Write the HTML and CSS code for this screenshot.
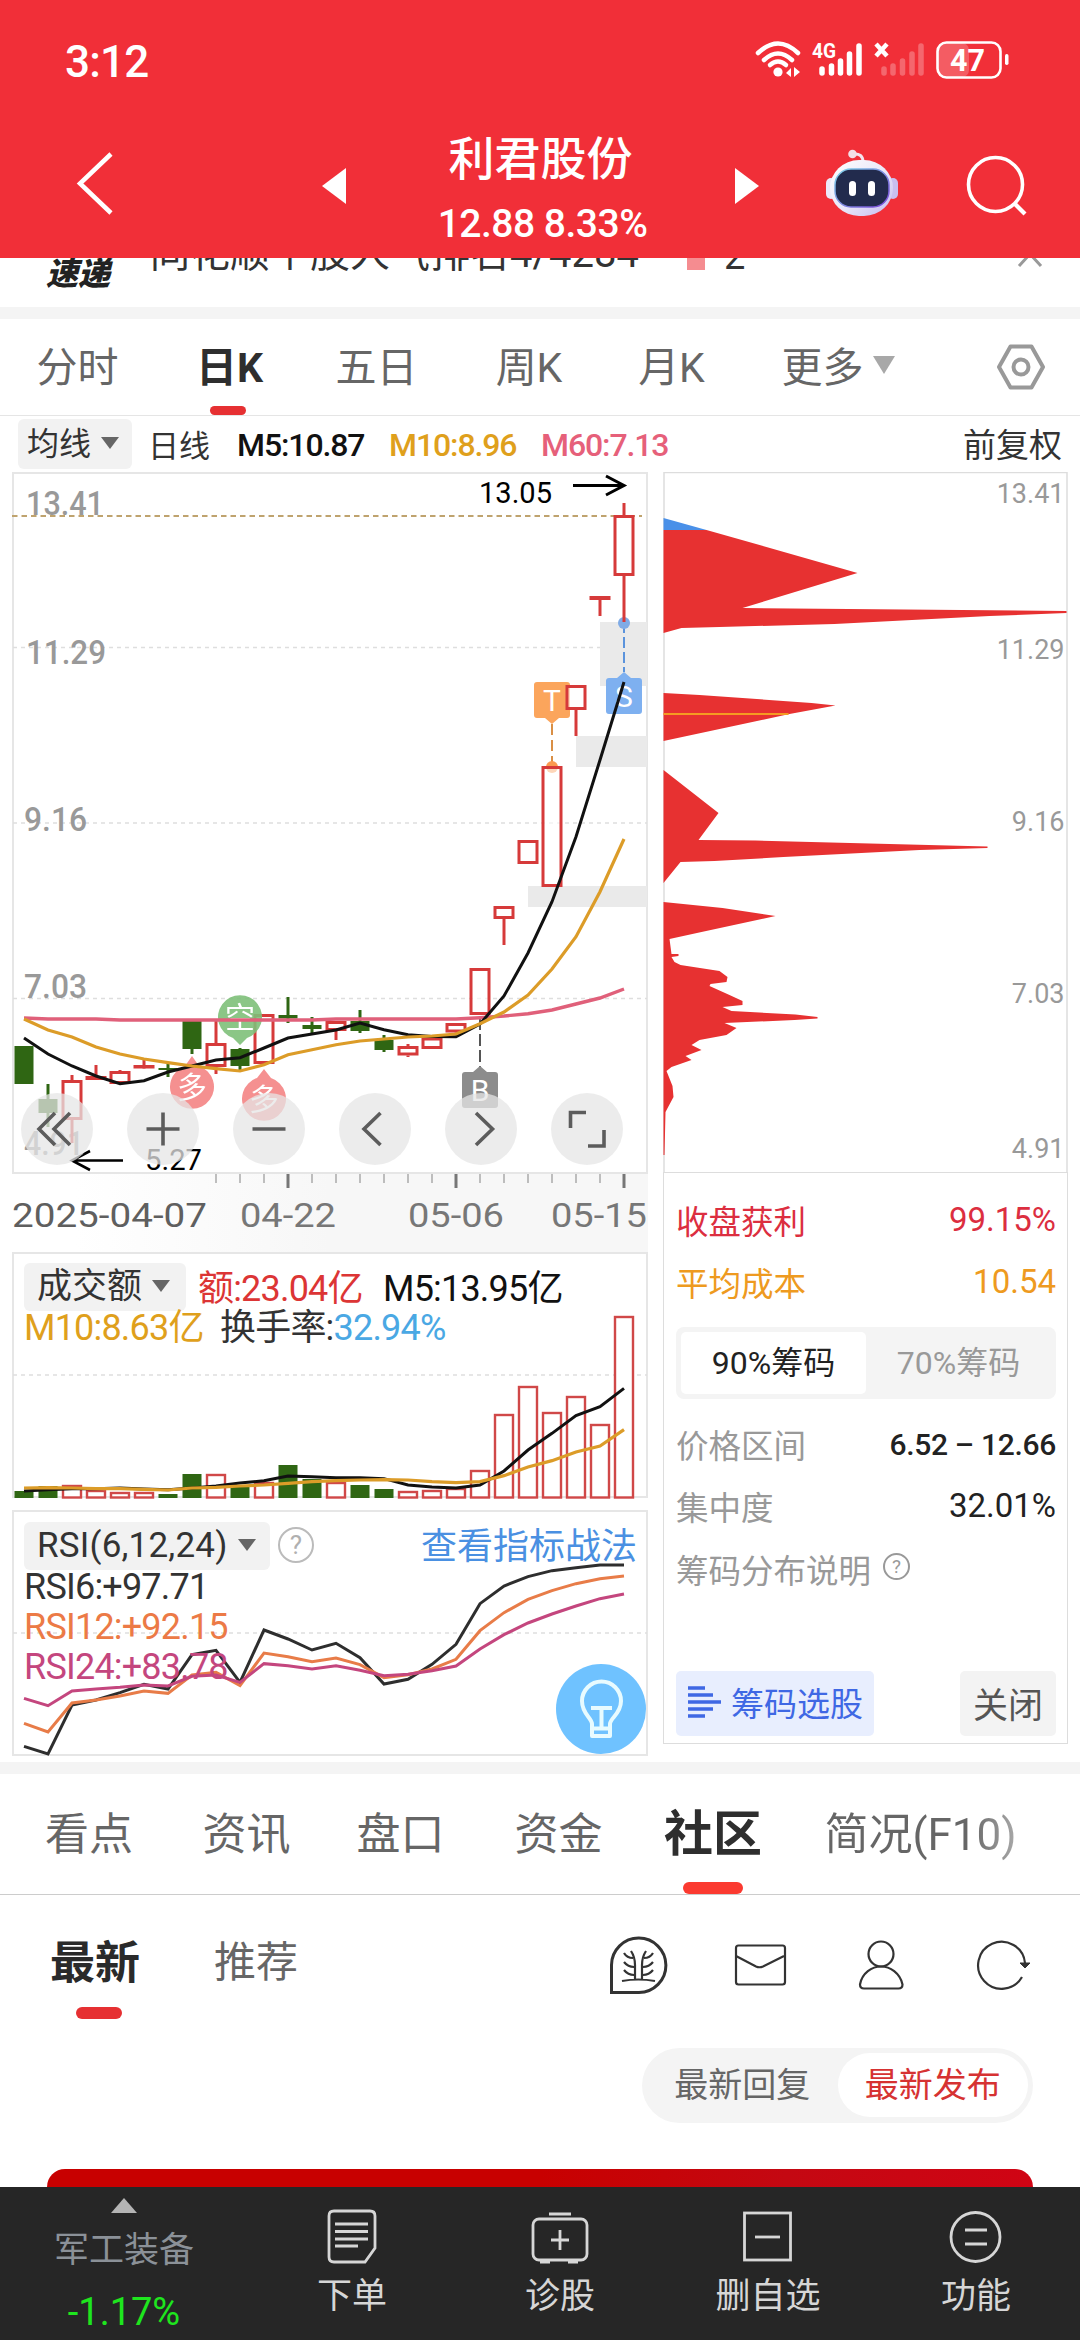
FILE: index.html
```html
<!DOCTYPE html>
<html lang="zh-CN">
<head>
    <meta charset="UTF-8">
    <meta name="viewport" content="width=device-width, initial-scale=1.0">
    <title>利君股份</title>
    <link rel="stylesheet" href="styles.css">
</head>
<body>
    <div class="header">
        <div class="statusbar">
            <span class="clock">3:12</span>
            <svg class="status-icons" width="260" height="50" viewBox="750 35 260 50">
                <g fill="none" stroke="#fff" stroke-width="4.5" stroke-linecap="round">
                    <path d="M758 53Q778 34 798 53"/>
                    <path d="M764 60Q778 47 792 60"/>
                    <path d="M770 65Q778 58 786 65"/>
                </g>
                <circle cx="778" cy="72" r="4.6" fill="#fff"/>
                <path d="M791 68v9l-5-4zM794 67v10l6-5z" fill="#fff"/>
                <text class="net" x="812" y="58" textLength="24" lengthAdjust="spacingAndGlyphs">4G</text>
                <g stroke="#fff" stroke-width="5.5" stroke-linecap="round">
                    <path d="M822 69v4M831.5 66v7M840.5 61v12M849.5 54v19M859 46v27"/>
                    <path d="M884 69v4M893 66v7M902.500 61v12M912 54v19M921 46v27" opacity=".27"/>
                </g>
                <path d="M876 44l11 12M887 44l-11 12" stroke="#fff" stroke-width="4.5"/>
                <rect x="938" y="43" width="31" height="34" rx="7" fill="#fff" opacity=".22"/>
                <rect x="937.500" y="42.500" width="63" height="35" rx="9" fill="none" stroke="#fff" stroke-width="2.600"/>
                <rect x="1005" y="54" width="3.500" height="11" rx="1.700" fill="#fff"/>
                <text class="batt" x="950" y="70.500" textLength="35" lengthAdjust="spacingAndGlyphs">47</text>
            </svg>
        </div>
        <div class="titlebar">
            <svg class="back" width="50" height="70" viewBox="70 148 50 70"><path d="M111 154L80 183.500L111 213" fill="none" stroke="#fff" stroke-width="4.500"/></svg>
            <svg class="prev" width="24" height="36" viewBox="0 0 24 36"><path d="M24 0v36L0 18z" fill="#fff"/></svg>
            <div class="title">
                <div class="stock-name">利君股份</div>
                <div class="stock-price">12.88 8.33%</div>
            </div>
            <svg class="next" width="24" height="36" viewBox="0 0 24 36"><path d="M0 0v36l24-18z" fill="#fff"/></svg>
            <svg class="robot" width="74" height="70" viewBox="824 148 74 70">
                <defs>
                    <linearGradient id="shell" x1="0" y1="0" x2="1" y2="1">
                        <stop offset="0" stop-color="#fff"/>
                        <stop offset=".55" stop-color="#e9e6f8"/>
                        <stop offset="1" stop-color="#c3baf0"/>
                    </linearGradient>
                    <linearGradient id="rim" x1="0" y1="0" x2="1" y2="1">
                        <stop offset="0" stop-color="#7fd4e8"/>
                        <stop offset="1" stop-color="#7a45d8"/>
                    </linearGradient>
                </defs>
                <path d="M852 154Q862 153 862 162" fill="none" stroke="#f3e4ee" stroke-width="3"/>
                <circle cx="851.500" cy="154" r="4.300" fill="#f3dfe6"/>
                <rect x="825" y="178" width="10" height="21" rx="5" fill="#ece8f8"/>
                <rect x="887" y="178" width="10" height="21" rx="5" fill="#c9bff0"/>
                <rect x="829" y="160" width="63" height="56" rx="29" fill="url(#shell)"/>
                <rect x="834" y="169" width="54" height="38" rx="16" fill="#222b4d" stroke="url(#rim)" stroke-width="1.500"/>
                <rect x="848" y="181" width="7" height="15" rx="3.500" fill="#fff"/>
                <rect x="867" y="181" width="7" height="15" rx="3.500" fill="#fff"/>
            </svg>
            <svg class="search" width="64" height="64" viewBox="964 154 64 64"><circle cx="994.500" cy="184.500" r="27" fill="none" stroke="#fff" stroke-width="3.600"/><path d="M1013 203l11 11" stroke="#fff" stroke-width="4.200"/></svg>
        </div>
    </div>

    <div class="news">
        <span class="news-tag">速递</span>
        <span class="news-text">同花顺个股人气排名4/4284</span>
        <span class="news-flag"></span>
        <span class="news-num">2</span>
        <svg class="news-arrow" width="26" height="14" viewBox="0 0 26 14"><path d="M2 8L13 -4L24 8" fill="none" stroke="#999" stroke-width="3"/></svg>
    </div>
    <div class="band"></div>

    <div class="period-tabs">
        <span>分时</span>
        <span class="active">日K</span>
        <span>五日</span>
        <span>周K</span>
        <span>月K</span>
        <span>更多<i class="caret big"></i></span>
        <svg width="50" height="48" viewBox="0 0 50 48"><path d="M14.500 3.500h21L47 24L35.500 44.500h-21L3 24z" fill="none" stroke="#999" stroke-width="4" stroke-linejoin="round"/><circle cx="25" cy="24" r="7.500" fill="none" stroke="#999" stroke-width="4"/></svg>
    </div>

    <div class="ma-row">
        <span class="chip">均线<i class="caret"></i></span>
        <span class="ma-day">日线</span>
        <span class="ma-num black">M5:10.87</span>
        <span class="ma-num yellow">M10:8.96</span>
        <span class="ma-num pink">M60:7.13</span>
        <span class="fq">前复权</span>
    </div>

    <div class="charts">
        <div class="left">
            <div class="kline">
                <svg id="kline" width="636" height="780" viewBox="12 472 636 780"></svg>
                <div class="kline-nav">
                    <span><svg viewBox="0 0 72 72"><path d="M34 20L18 36l16 16M49 20L33 36l16 16"/></svg></span>
                    <span><svg viewBox="0 0 72 72"><path d="M36 19.500v33M19.500 36h33"/></svg></span>
                    <span><svg viewBox="0 0 72 72"><path d="M19.500 36h33"/></svg></span>
                    <span><svg viewBox="0 0 72 72"><path d="M41.500 20L25 36l16.500 16"/></svg></span>
                    <span><svg viewBox="0 0 72 72"><path d="M31 20l16.500 16L31 52"/></svg></span>
                    <span><svg viewBox="0 0 72 72"><path d="M19.500 35V19.500H35M53 37v16H37"/></svg></span>
                </div>
            </div>
            <div class="volume">
                <svg id="volume" width="636" height="247" viewBox="12 1252 636 247"></svg>
                <div class="legend vol-legend">
                    <span class="chip vol-chip">成交额<i class="caret"></i></span>
                    <span class="l1 red">额:23.04亿</span>
                    <span class="l2 black">M5:13.95亿</span>
                </div>
                <div class="legend vol-legend2">
                    <span class="l3 yellow">M10:8.63亿</span>
                    <span class="l4">换手率:<b>32.94%</b></span>
                </div>
            </div>
            <div class="rsi">
                <svg id="rsi" width="636" height="247" viewBox="12 1510 636 247"></svg>
                <div class="legend rsi-head">
                    <span class="chip rsi-chip"><em>RSI(6,12,24)</em><i class="caret"></i></span>
                    <span class="help">?</span>
                    <span class="rsi-link">查看指标战法</span>
                </div>
                <div class="rsi-values">
                    <div>RSI6:+97.71</div>
                    <div class="orange">RSI12:+92.15</div>
                    <div class="purple">RSI24:+83.78</div>
                </div>
                <svg class="bulb" width="90" height="90" viewBox="0 0 90 90">
                    <circle cx="45" cy="45" r="45" fill="#6fc2ff"/>
                    <g fill="none" stroke="#e8fbff" stroke-width="4">
                        <path d="M36 72V60C36 54 26 50 26 37a19.500 19.500 0 0 1 39 0C65 50 54 54 54 60V72z" stroke-linejoin="round"/>
                        <path d="M35 44h21M45.500 44v20M36 64.500h18"/>
                    </g>
                </svg>
            </div>
        </div>

        <div class="right">
            <svg id="chips" width="405" height="700" viewBox="663.500 472 405 700"></svg>
            <div class="chip-info">
                <div class="row red2"><span>收盘获利</span><b>99.15%</b></div>
                <div class="row amber"><span>平均成本</span><b>10.54</b></div>
                <div class="segment"><span class="on">90%筹码</span><span>70%筹码</span></div>
                <div class="row gray"><span>价格区间</span><b class="range">6.52 – 12.66</b></div>
                <div class="row gray"><span>集中度</span><b>32.01%</b></div>
                <div class="row gray explain"><span>筹码分布说明</span><i class="help small">?</i></div>
                <div class="chip-btns">
                    <span class="pick">
                        <svg width="34" height="34" viewBox="0 0 34 34"><path d="M0 3h17M0 10h25M0 17h33M0 24h25M0 31h17" stroke="#3f68e4" stroke-width="3.600"/></svg>
                        筹码选股
                    </span>
                    <span class="close">关闭</span>
                </div>
            </div>
        </div>
    </div>
    <div class="band"></div>

    <div class="main-tabs">
        <span>看点</span>
        <span>资讯</span>
        <span>盘口</span>
        <span>资金</span>
        <span class="active">社区</span>
        <span class="f10">简况(F10)</span>
    </div>

    <div class="sub-tabs">
        <span class="active">最新</span>
        <span class="rec">推荐</span>
        <svg width="470" height="70" viewBox="600 1930 470 70">
            <g fill="none" stroke="#333" stroke-width="2.200">
                <path d="M611.500 1992.500V1965a27.200 27.200 0 1 1 27.500 27.500z" stroke-width="3"/>
                <path d="M631 1951q4 6 4 14v14M646 1951q-4 6-4 14v14M622 1981q16-3 33 0M624 1953q3 5 9 5M624 1962q4 5 10 5M624 1970q4 5 10 5M653 1953q-3 5-9 5M653 1962q-4 5-10 5M653 1970q-4 5-10 5"/>
                <rect x="736" y="1945.500" width="49" height="39" rx="2.500"/>
                <path d="M736 1956l20 10.500q3.500 1.500 7 0l21-10.500"/>
                <circle cx="881" cy="1954" r="12.500"/>
                <path d="M860 1984.500C862 1973 872 1966.500 881 1966.500s19 6.500 21.500 18q0 4-4 4h-34.500q-4 0-4-4z"/>
                <path d="M1022 1977A23.500 23.500 0 1 1 1025 1963"/>
            </g>
            <path d="M1020 1963h10l-5 5z" fill="#333" stroke="#333"/>
        </svg>
    </div>

    <div class="sort-row">
        <div class="sort"><span>最新回复</span><span class="on">最新发布</span></div>
    </div>
    <div class="card"></div>

    <div class="bottombar">
        <div class="sector">
            <i class="up"></i>
            <div class="sector-name">军工装备</div>
            <div class="sector-pct">-1.17%</div>
        </div>
        <div class="item">
            <svg viewBox="0 0 60 60"><path d="M12 4h36q5 0 5 5v32L43 55H12q-5 0-5-5V9q0-5 5-5z"/><path d="M13 17h33M13 24.500h33M13 32h33M13 39h23"/></svg>
            下单
        </div>
        <div class="item">
            <svg viewBox="0 0 60 60"><rect x="3" y="12" width="54" height="41" rx="6"/><path d="M19 7h22M30 23v20M21 33h18M10 55h10M38 55h10"/></svg>
            诊股
        </div>
        <div class="item">
            <svg viewBox="0 0 60 60"><rect x="6.500" y="6" width="46" height="47"/><path d="M17 30h25"/></svg>
            删自选
        </div>
        <div class="item">
            <svg viewBox="0 0 60 60"><circle cx="29.500" cy="30" r="24.500"/><path d="M19 23h22M19 37h22"/></svg>
            功能
        </div>
    </div>
    <script src="chart.js"></script>
</body>
</html>
```
FILE: styles.css
```css
body {
    margin: 0;
    width: 1080px;
    height: 2340px;
    overflow: hidden;
    background-color: #fff;
    color: #333;
    font-family: Roboto, "Noto Sans CJK SC", sans-serif;
    display: flex;
    flex-direction: column;
}
span, div {
    white-space: nowrap;
}
svg {
    display: block;
    flex-shrink: 0;
}
em, i {
    font-style: normal;
}
.red { color: #dc3535; }
.black { color: #111; }
.yellow { color: #dfa01c; }
.pink { color: #e6607a; }
.orange { color: #ec7a46; }
.purple { color: #c4467e; }

/* header */
.header {
    height: 258px;
    flex-shrink: 0;
    background-color: #f12f38;
    color: #fff;
}
.statusbar {
    height: 120px;
    display: flex;
    align-items: center;
    justify-content: space-between;
    padding: 0 70px 0 65px;
}
.clock {
    font-size: 44px;
    font-weight: 500;
    letter-spacing: -0.8px;
    padding-top: 4px;
}
.net {
    font-size: 21px;
    font-weight: 700;
    fill: #fff;
}
.batt {
    font-size: 32px;
    font-weight: 700;
    fill: #fff;
}
.titlebar {
    height: 138px;
    display: flex;
    align-items: flex-start;
}
.back { margin: 28px 0 0 70px; }
.prev { margin: 48px 0 0 202px; }
.title {
    width: 389px;
    text-align: center;
}
.stock-name {
    font-size: 46px;
    font-weight: 500;
    line-height: 60px;
    padding-top: 9px;
    color: #fff;
}
.stock-price {
    font-size: 39px;
    font-weight: 500;
    line-height: 48px;
    margin-top: 11px;
    letter-spacing: -0.5px;
    padding-left: 4px;
}
.next { margin: 48px 0 0 0; }
.robot { margin: 28px 0 0 66px; }
.search { margin: 34px 0 0 66px; }

/* news strip, scrolled half under the header */
.news {
    height: 49px;
    flex-shrink: 0;
    overflow: hidden;
    display: flex;
    align-items: flex-start;
    padding-left: 46px;
}
.news-tag {
    width: 104px;
    font-size: 32px;
    font-weight: 900;
    font-style: italic;
    line-height: 32px;
    color: #222;
}
.news-text {
    width: 537px;
    font-size: 40px;
    line-height: 40px;
    margin-top: -24px;
}
.news-flag {
    width: 18px;
    height: 12px;
    background-color: #f58c90;
}
.news-num {
    font-size: 38px;
    line-height: 40px;
    margin: -22px 0 0 19px;
}
.news-arrow { margin-left: 272px; }
.band {
    height: 12px;
    flex-shrink: 0;
    background-color: #f4f4f4;
}

/* period tabs */
.period-tabs {
    height: 96px;
    flex-shrink: 0;
    display: grid;
    grid-template-columns: 155px 149px 145px 160px 125px 208px 138px;
    align-items: center;
    justify-items: center;
    border-bottom: 1px solid #e5e5e5;
    font-size: 41px;
    color: #666;
}
.period-tabs span {
    position: relative;
    height: 96px;
    line-height: 98px;
}
.period-tabs svg { margin-left: 20px; }
.period-tabs .active {
    color: #2e2e2e;
    font-weight: 700;
}
.active::after {
    content: "";
    position: absolute;
    left: 50%;
    bottom: 0;
    width: 36px;
    height: 9px;
    margin-left: -19px;
    border-radius: 5px;
    background-color: #e63032;
}
.caret {
    display: inline-block;
    border: 9px solid transparent;
    border-top: 12px solid #666;
    border-bottom: 0;
    margin-left: 10px;
    vertical-align: 6px;
}
.caret.big {
    border-width: 18px 11px 0;
    border-top-color: #a8a8a8;
    margin-left: 9px;
    vertical-align: 8px;
}

/* moving average row */
.ma-row {
    height: 56px;
    flex-shrink: 0;
    display: flex;
    align-items: center;
    padding: 0 18px;
}
.chip {
    box-sizing: border-box;
    background-color: #f2f2f2;
    border-radius: 6px;
}
.ma-row .chip {
    width: 114px;
    height: 50px;
    line-height: 51px;
    padding-left: 9px;
    font-size: 32px;
}
.ma-day {
    width: 89px;
    margin: -2px 0 0 16px;
    font-size: 31px;
}
.ma-num {
    width: 152px;
    margin-top: 2px;
    font-size: 32px;
    font-weight: 500;
    letter-spacing: -1.1px;
}
.fq {
    margin: -2px 0 0 auto;
    font-size: 33px;
}

/* charts */
.charts {
    height: 1290px;
    flex-shrink: 0;
    display: flex;
    align-items: flex-start;
}
.left {
    width: 636px;
    margin-left: 12px;
}
.kline, .volume, .rsi {
    position: relative;
}
.kline-nav {
    position: absolute;
    left: 9px;
    top: 621px;
    display: flex;
    gap: 34px;
}
.kline-nav span {
    width: 72px;
    height: 72px;
    border-radius: 50%;
    background-color: rgba(230, 230, 230, 0.75);
}
.kline-nav path {
    fill: none;
    stroke: #5c5c5c;
    stroke-width: 3.6;
}
.kline text, #chips text { fill: #999; }
.axis {
    font-size: 34px;
    font-weight: 500;
}
.kline .date {
    font-size: 34px;
    fill: #777;
}
.kline .date.first { fill: #5f5f5f; }
.kline .tip {
    font-size: 29px;
    fill: #000;
}
.kline .mark {
    font-size: 30px;
    fill: #fff;
    text-anchor: middle;
}
.rsi { margin-top: 11px; }
.legend {
    position: absolute;
    left: 12px;
    display: flex;
    align-items: center;
    font-size: 36px;
}
.vol-legend { top: 11px; }
.vol-legend2 {
    top: 48px;
    height: 48px;
}
.legend .chip {
    height: 48px;
    line-height: 47px;
    padding-left: 13px;
    font-size: 35px;
}
.vol-chip { width: 162px; }
.l1, .l2, .l3, .l4 { letter-spacing: -0.8px; }
.l1, .l2 { margin-top: -5px; }
.l1 {
    margin-left: 12px;
    width: 185px;
}
.l3 { width: 196px; }
.l4 b {
    color: #4aa8e4;
    font-weight: 400;
}
.rsi-head { top: 12px; }
.rsi-chip { width: 246px; }
.rsi-chip em { letter-spacing: 0.2px; }
.help {
    box-sizing: border-box;
    width: 36px;
    height: 36px;
    margin: -3px 0 0 8px;
    border: 2.5px solid #bbb;
    border-radius: 50%;
    color: #b0b0b0;
    font-size: 26px;
    line-height: 32px;
    text-align: center;
}
.help.small {
    width: 27px;
    height: 27px;
    margin-left: 12px;
    border: 2px solid #999;
    color: #999;
    font-size: 19px;
    line-height: 24px;
}
.rsi-link {
    margin: -7px 0 0 107px;
    font-size: 36px;
    color: #4a90e2;
}
.rsi-values {
    position: absolute;
    left: 12px;
    top: 57px;
    font-size: 36px;
    line-height: 40px;
    letter-spacing: -0.8px;
}
.bulb {
    position: absolute;
    left: 544px;
    top: 154px;
}

/* chip distribution */
.right {
    box-sizing: border-box;
    width: 405px;
    height: 1272px;
    margin-left: 15px;
}
#chips text {
    font-size: 27px;
    text-anchor: end;
}
.chip-info {
    box-sizing: border-box;
    height: 572px;
    border: 1.5px solid #ddd;
    padding: 15px 11px 0 12px;
}
.row {
    display: flex;
    align-items: center;
    justify-content: space-between;
    height: 62.5px;
    font-size: 32.5px;
}
.row b {
    font-size: 33px;
    font-weight: 400;
}
.red2 { color: #dc2e40; }
.amber { color: #ee9a20; }
.gray { color: #999; }
.gray b { color: #222; }
.row .range {
    font-size: 30px;
    font-weight: 500;
    letter-spacing: -0.3px;
    margin-top: 3px;
}
.row.explain { justify-content: flex-start; }
.segment {
    display: flex;
    box-sizing: border-box;
    height: 72px;
    margin: 14px 0 13px;
    padding: 5px;
    border-radius: 8px;
    background-color: #f4f4f4;
    font-size: 32px;
    color: #999;
}
.segment span {
    flex: 1;
    height: 62px;
    line-height: 63px;
    text-align: center;
}
.segment .on {
    background-color: #fff;
    color: #222;
    border-radius: 5px;
}
.chip-btns {
    display: flex;
    justify-content: space-between;
    margin-top: 71px;
}
.chip-btns span {
    display: flex;
    align-items: center;
    box-sizing: border-box;
    height: 65px;
    border-radius: 5px;
    padding-bottom: 2px;
}
.pick {
    width: 198px;
    padding-left: 12px;
    gap: 9px;
    background-color: #e8eefe;
    color: #3f68e4;
    font-size: 33px;
}
.close {
    width: 96px;
    padding-left: 13px;
    background-color: #f3f3f3;
    color: #555;
    font-size: 35px;
}

/* content tabs */
.main-tabs {
    height: 120px;
    flex-shrink: 0;
    display: grid;
    grid-template-columns: 178px 137px 171px 145px 164px 251px;
    justify-items: center;
    border-bottom: 1px solid #ccc;
    font-size: 44px;
    line-height: 122px;
    color: #666;
}
.main-tabs span {
    position: relative;
    height: 120px;
}
.main-tabs .active {
    font-size: 49px;
    font-weight: 700;
    color: #2e2e2e;
}
.main-tabs .active::after {
    width: 60px;
    height: 12px;
    margin-left: -30px;
    border-radius: 6px;
    background-color: #fb3a30;
}
.f10 {
    background: linear-gradient(90deg, #666 75%, #aaa);
    -webkit-background-clip: text;
    color: transparent;
}
.sub-tabs {
    height: 153px;
    flex-shrink: 0;
    display: flex;
    padding-left: 50px;
    font-size: 45px;
    line-height: 137px;
}
.sub-tabs span {
    position: relative;
    width: 90px;
    height: 124px;
}
.sub-tabs .active {
    font-weight: 700;
    color: #2a2a2a;
}
.sub-tabs .active::after {
    width: 46px;
    height: 12px;
    margin-left: -19px;
    border-radius: 6px;
}
.sub-tabs .rec {
    margin-left: 74px;
    font-size: 42px;
    line-height: 135px;
    color: #666;
}
.sub-tabs svg { margin: 35px 0 0 296px; }
.sort-row {
    height: 121px;
    flex-shrink: 0;
    display: flex;
    justify-content: flex-end;
    align-items: flex-start;
    padding-right: 47px;
}
.sort {
    display: flex;
    box-sizing: border-box;
    width: 391px;
    height: 75px;
    padding: 5px;
    border-radius: 38px;
    background-color: #f4f4f4;
    font-size: 34px;
    line-height: 64px;
    color: #666;
}
.sort span {
    width: 191px;
    text-align: center;
}
.sort .on {
    height: 64px;
    border-radius: 32px;
    background-color: #fff;
    color: #d63232;
}
.card {
    height: 18px;
    flex-shrink: 0;
    margin: 0 47px;
    border-radius: 22px 22px 0 0;
    background: linear-gradient(90deg, #c80000 50%, #c40812 75%, #d00414);
}

/* bottom bar */
.bottombar {
    height: 153px;
    flex-shrink: 0;
    display: grid;
    grid-template-columns: 248px 208px 208px 208px 208px;
    background-color: #262626;
    color: #d6d6d6;
}
.sector {
    display: flex;
    flex-direction: column;
    align-items: center;
}
.up {
    border: 13px solid transparent;
    border-top: 0;
    border-bottom: 15px solid #b4b4b4;
    margin-top: 11px;
}
.sector-name {
    margin-top: 12px;
    font-size: 35px;
    line-height: 52px;
    color: #8b9198;
}
.sector-pct {
    font-size: 38px;
    line-height: 50px;
    margin-top: 10px;
    color: #1ee61e;
}
.item {
    display: flex;
    flex-direction: column;
    align-items: center;
    font-size: 35px;
    line-height: 48px;
}
.item svg {
    width: 60px;
    height: 60px;
    margin: 20px 0 6px;
    fill: none;
    stroke: #d6d6d6;
    stroke-width: 2.8;
}
```
FILE: chart.js
```js
// x of the n-th trading day
function dayX(i) {
    return 24 + 24 * i;
}

function line(points, color, width) {
    const pts = points.map((y, i) => dayX(i) + ',' + y).join(' ');
    return `<polyline points="${pts}" fill="none" stroke="${color}" stroke-width="${width}"/>`;
}

function frame(y, h) {
    return `<rect x="13" y="${y}" width="634" height="${h}" fill="none" stroke="#e6e6e6" stroke-width="2"/>`;
}

function grid(y, color) {
    return `<path d="M13 ${y}H647" stroke="${color || '#dedede'}" stroke-width="1.5" stroke-dasharray="4 4"/>`;
}

function label(text, x, y, width, cls) {
    return `<text class="${cls}" x="${x}" y="${y}" textLength="${width}" lengthAdjust="spacingAndGlyphs">${text}</text>`;
}

const RED = '#d63a3a';
const GREEN = '#2f6613';

// [color, body top, body bottom, wick top, wick bottom]
const candles = [
    ['g', 1046, 1084, 1046, 1084], ['g', 1099, 1113, 1084, 1127], ['r', 1080, 1120, 1075, 1143],
    ['r', 1076, 1080, 1065, 1080], ['r', 1071, 1084, 1070, 1084], ['r', 1065, 1068.5, 1060, 1068],
    ['g', 1068, 1070, 1064, 1077], ['g', 1021, 1049, 1021, 1054], ['r', 1043, 1067, 1021, 1074],
    ['g', 1049, 1066, 1048, 1070], ['r', 1014, 1064, 1014, 1064], ['g', 1015, 1018.5, 997, 1023],
    ['g', 1025, 1029, 1017, 1033], ['r', 1021, 1031, 1021, 1040], ['g', 1021, 1031, 1010, 1033],
    ['g', 1040, 1050, 1035, 1052], ['r', 1046, 1055.5, 1044, 1057], ['r', 1037.5, 1049, 1037.5, 1049],
    ['r', 1023, 1032.5, 1023, 1032], ['r', 968, 1015, 968, 1015], ['r', 906, 919, 906, 945],
    ['r', 840, 864, 840, 864], ['r', 766, 887, 766, 887], ['r', 685, 710, 685, 736],
    ['r', 596, 600, 596, 616], ['r', 515, 576, 503, 622]
];

const ma5 = [1038, 1054, 1066, 1076, 1083.7, 1080.7, 1072, 1066, 1060, 1057.7, 1048, 1038, 1034, 1030, 1023, 1029.7, 1034.7, 1036.5, 1036.7, 1024, 996, 953, 901.7, 836.7, 760, 682];
const ma10 = [1019, 1030, 1037, 1047, 1054, 1059, 1062.7, 1066, 1068.7, 1071, 1064.7, 1054.7, 1049.7, 1044.7, 1041, 1039, 1037, 1036, 1034, 1023.7, 1012, 995, 969, 936.7, 891.7, 839];
const ma60 = [1018, 1019, 1019, 1019, 1020, 1020, 1020, 1020, 1020, 1020, 1020, 1020, 1020, 1019, 1019, 1019, 1019, 1019, 1019, 1017.7, 1016, 1013.7, 1010, 1004, 998, 989];

function drawKline() {
    let s = `<defs><linearGradient id="fade"><stop offset=".1" stop-color="#f7f7f7" stop-opacity="0"/><stop offset=".5" stop-color="#f7f7f7"/></linearGradient></defs>`;
    s += '<rect x="12" y="1174" width="636" height="78" fill="url(#fade)"/>';
    s += frame(473, 700);
    s += grid(647.5) + grid(823) + grid(998.5);
    s += label('13.41', 26, 515, 78, 'axis') + label('11.29', 26, 664, 80, 'axis') + label('9.16', 24, 831, 63, 'axis');
    s += label('7.03', 24, 998, 63, 'axis') + label('4.91', 24, 1155, 60, 'axis');
    s += '<path d="M12 516H642" stroke="#bfa36e" stroke-width="2" stroke-dasharray="5.500 4"/>';

    // gap areas
    s += '<path d="M600 622h47v64h-47zM576 736h71v31h-71zM528 886h119v21h-119z" fill="#eaeaea"/>';

    // T / S / B markers
    s += '<path d="M552 724V766" stroke="#d98f45" stroke-width="2" stroke-dasharray="11 5"/><circle cx="552" cy="767" r="6" fill="#fb9a50"/>';
    s += '<path d="M537 682h30q3 0 3 3v30q0 3-3 3h-8l-7 6l-7-6h-8q-3 0-3-3v-30q0-3 3-3z" fill="#fba55c"/>';
    s += '<text class="mark" x="552" y="711">T</text>';
    s += '<path d="M624 622V672" stroke="#5b93dc" stroke-width="2" stroke-dasharray="11 4"/><circle cx="624" cy="623" r="6" fill="#7fabe6"/>';
    s += '<path d="M609 678h8l7-6l7 6h8q3 0 3 3v30q0 3-3 3h-30q-3 0-3-3v-30q0-3 3-3z" fill="#7eb0f0"/>';
    s += '<text class="mark" x="624" y="707">S</text>';
    s += '<path d="M480 1018V1068" stroke="#555" stroke-width="2" stroke-dasharray="12 4"/>';

    candles.forEach(([c, top, bottom, high, low], i) => {
        const x = dayX(i);
        const color = c === 'r' ? RED : GREEN;
        if (c === 'g') {
            s += `<path d="M${x} ${high}V${low}" stroke="${color}" stroke-width="3"/>`;
            s += `<rect x="${x - 9.5}" y="${top}" width="19" height="${bottom - top}" fill="${color}"/>`;
        } else {
            s += `<path d="M${x} ${high}V${top}M${x} ${bottom}V${low}" stroke="${color}" stroke-width="3"/>`;
            if (bottom - top < 5) {
                s += `<rect x="${x - 10.5}" y="${top}" width="21" height="${bottom - top}" fill="${color}"/>`;
            } else {
                s += `<rect x="${x - 9}" y="${top + 1.5}" width="18" height="${bottom - top - 3}" fill="#fff" fill-opacity=".6" stroke="${color}" stroke-width="3"/>`;
            }
        }
    });

    // signal balloons
    s += '<g opacity=".9"><path d="M240 1045l-7-7a22 22 0 1 1 14 0z" fill="#7fc07a"/><text class="mark" x="240" y="1028">空</text></g>';
    s += '<g opacity=".9"><path d="M192 1056l-7 10a22 22 0 1 0 14 0z" fill="#f58585"/><text class="mark" x="192" y="1098">多</text></g>';
    s += '<g opacity=".9"><path d="M264 1069l-7 9a22 22 0 1 0 14 0z" fill="#f58585"/><text class="mark" x="264" y="1110">多</text></g>';

    s += line(ma60, '#e0607a', 3.4) + line(ma5, '#111', 3) + line(ma10, '#dc9c28', 3.2);

    s += '<path d="M465 1072h8l7-6l7 6h8q3 0 3 3v30q0 3-3 3h-30q-3 0-3-3v-30q0-3 3-3z" fill="#8c8c8c"/>';
    s += '<text class="mark" x="480" y="1101">B</text>';

    s += label('13.05', 479, 503, 73, 'tip') + '<path d="M573 485.500H623M606 476l18 9.500l-18 9.500" fill="none" stroke="#000" stroke-width="3"/>';
    s += label('5.27', 145, 1170, 57, 'tip') + '<path d="M123 1160.500H73M90 1151l-18 9.500l18 9.500" fill="none" stroke="#000" stroke-width="2.600"/>';

    // time axis
    for (let i = 8; i < 26; i++) {
        const big = i === 11 || i === 18 || i === 25;
        s += `<path d="M${dayX(i)} 1174V${big ? 1188 : 1183}" stroke="${big ? '#777' : '#aaa'}" stroke-width="${big ? 3 : 1.5}"/>`;
    }
    s += label('2025-04-07', 12, 1227, 195, 'date first') + label('04-22', 240, 1227, 96, 'date');
    s += label('05-06', 408, 1227, 96, 'date') + label('05-15', 551, 1227, 96, 'date');
    document.getElementById('kline').innerHTML = s;
}

function drawVolume() {
    const tops = [1491, 1486, 1485, 1490, 1492, 1492, 1494, 1474, 1474, 1487, 1482, 1465, 1479, 1482, 1485, 1489, 1491, 1490, 1488, 1470, 1414, 1386, 1412, 1396, 1424, 1316];
    const m5 = [753, 749, 746, 746, 744, 747, 749, 744, 738, 729, 722, 708, 710, 713, 713, 716, 735, 741, 744, 735, 693, 630, 580, 527, 500, 445];
    const m10 = [744, 743, 744, 746, 746, 748, 750, 744, 742, 738, 735, 730, 725, 722, 720, 719, 720, 725, 728, 725, 707, 681, 662, 636, 618, 569];
    let s = frame(1253, 244) + grid(1375);
    tops.forEach((top, i) => {
        const x = dayX(i);
        if (candles[i][0] === 'g') {
            s += `<rect x="${x - 9.5}" y="${top}" width="19" height="${1498 - top}" fill="${GREEN}"/>`;
        } else {
            s += `<rect x="${x - 9}" y="${top + 1}" width="18" height="${1496.5 - top}" fill="#fff" stroke="#d04848" stroke-width="2.400"/>`;
        }
    });
    s += line(m5.map(v => 1240 + v / 3), '#111', 3) + line(m10.map(v => 1240 + v / 3), '#dc9c28', 3.2);
    document.getElementById('volume').innerHTML = s;
}

function drawRsi() {
    const r6 = [739, 762, 615, 600, 578, 553, 567, 464, 451, 547, 390, 417, 450, 430, 473, 552, 538, 493, 433, 311, 258, 230, 212, 203, 195, 195];
    const r12 = [670, 696, 609, 600, 588, 573, 580, 525, 517, 557, 459, 470, 485, 474, 494, 533, 524, 507, 478, 392, 338, 298, 272, 251, 236, 228];
    const r24 = [595, 617, 573, 567, 562, 555, 558, 529, 525, 547, 491, 497, 507, 497, 511, 527, 523, 512, 498, 447, 404, 369, 342, 318, 296, 282];
    const toY = v => 1500 + v / 3;
    let s = frame(1511, 244) + grid(1633);
    s += line(r6.map(toY), '#2e2e2e', 3) + line(r12.map(toY), '#e87c48', 3) + line(r24.map(toY), '#c4467e', 3);
    document.getElementById('rsi').innerHTML = s;
}

function drawChips() {
    const red = [
        '664,530 707,530 858,573 743,608 849,609 1067,611 1067,613 990,616 835,624 720,627 682,628 664,633',
        '664,693 700,695 812,703 836,705.5 790,714 664,741',
        '664,770 719,813 699,840 756,840.5 988,846.5 988,848 920,850 784,857 715,861 681,862 664,883',
        '664,902 723,908 776,916 702,932 670,939 672,954 679,954 679,956 672,957 675,962 681,965 720,971 728,977 727,982 711,984 710,986 730,995 743,1001 743,1005 723,1007 732,1011 796,1014.5 818,1017 818,1018.500 795,1020 725,1023 737,1028 727,1035 700,1040 692,1045 702,1050 686,1056 692,1060 672,1067 667,1071 673,1086 674,1097 666,1112 665,1155 664,1155'
    ];
    let s = '<path d="M664.500 1172V472.500H1067.500V1172" fill="none" stroke="#ddd" stroke-width="1.500"/>';
    s += '<polygon points="664,518 707,530 664,530" fill="#4a90e8"/>';
    red.forEach(p => s += `<polygon points="${p}" fill="#e73131"/>`);
    s += '<path d="M664 714H789" stroke="#f59b22" stroke-width="2"/>';
    [['13.41', 503], ['11.29', 659], ['9.16', 831], ['7.03', 1003], ['4.91', 1158]].forEach(([t, y]) => {
        s += `<text x="1065" y="${y}">${t}</text>`;
    });
    document.getElementById('chips').innerHTML = s;
}

drawKline();
drawVolume();
drawRsi();
drawChips();
```
